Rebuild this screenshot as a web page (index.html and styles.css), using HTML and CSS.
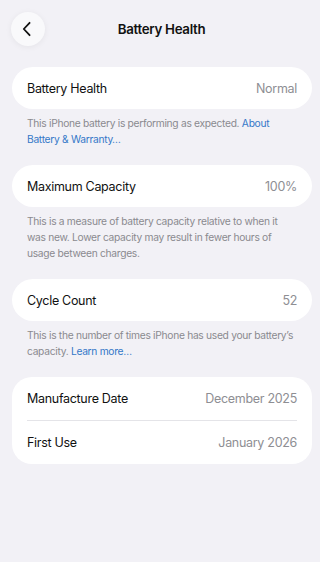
FILE: index.html
```html
<!DOCTYPE html>
<html>
<head>
<meta charset="utf-8">
<link rel="stylesheet" href="styles.css">
</head>
<body>
<header class="topbar">
  <div class="back">
    <svg width="12" height="16" viewBox="0 0 12 16"><path d="M8.6 1.8 L2.8 8 L8.6 14.2" fill="none" stroke="#111" stroke-width="1.8" stroke-linecap="round" stroke-linejoin="round"/></svg>
  </div>
  <div class="title">Battery Health</div>
  <div class="spacer"></div>
</header>
<main class="content">
  <section class="group">
    <div class="card">
      <div class="row"><span class="label">Battery Health</span><span class="value">Normal</span></div>
    </div>
    <p class="note">This iPhone battery is performing as expected. <span class="link">About Battery &amp; Warranty…</span></p>
  </section>
  <section class="group">
    <div class="card">
      <div class="row"><span class="label">Maximum Capacity</span><span class="value">100%</span></div>
    </div>
    <p class="note">This is a measure of battery capacity relative to when it<br>was new. Lower capacity may result in fewer hours of usage between charges.</p>
  </section>
  <section class="group">
    <div class="card">
      <div class="row"><span class="label">Cycle Count</span><span class="value">52</span></div>
    </div>
    <p class="note">This is the number of times iPhone has used your battery’s capacity. <span class="link">Learn more…</span></p>
  </section>
  <section class="group">
    <div class="card multi">
      <div class="row"><span class="label">Manufacture Date</span><span class="value">December 2025</span></div>
      <div class="divider"></div>
      <div class="row"><span class="label">First Use</span><span class="value">January 2026</span></div>
    </div>
  </section>
</main>
</body>
</html>
```
FILE: styles.css
```css
* { box-sizing: border-box; }
html, body { margin: 0; padding: 0; }
body {
  background: #f2f1f6;
  font-family: Inter, "Noto Sans", "Liberation Sans", sans-serif;
  color: #111;
  width: 320px;
  height: 562px;
  overflow: hidden;
}
.topbar {
  display: flex;
  align-items: center;
  padding: 12px 8px 0 11px;
  height: 46px;
}
.back {
  width: 34px;
  height: 34px;
  border-radius: 50%;
  background: #f9f9fb;
  box-shadow: 0 1px 6px rgba(0,0,0,0.06);
  display: flex;
  align-items: center;
  justify-content: center;
  padding-right: 2px;
}
.title {
  flex: 1;
  text-align: center;
  font-size: 13.3px;
  font-weight: 600;
  letter-spacing: -0.3px;
}
.spacer { width: 34px; }
.content {
  padding: 21px 8px 0 12px;
  display: flex;
  flex-direction: column;
}
.group { margin-bottom: 18px; }
.card {
  background: #fff;
  border-radius: 21px;
  padding: 0 15px;
}
.card.multi { border-radius: 20px; }
.row {
  height: 42px;
  display: flex;
  align-items: center;
  justify-content: space-between;
}
.card.multi .row { height: 43px; }
.label {
  font-size: 12.5px;
  letter-spacing: -0.3px;
}
.value {
  font-size: 12.5px;
  color: #8e8e93;
  letter-spacing: -0.3px;
}
.divider {
  height: 1px;
  background: #e4e4e8;
}
.note {
  margin: 0;
  padding: 6px 15px 0 15px;
  font-size: 10.25px;
  line-height: 16px;
  letter-spacing: -0.3px;
  color: #8a8a8f;
}
.link { color: #3478c8; }
```
